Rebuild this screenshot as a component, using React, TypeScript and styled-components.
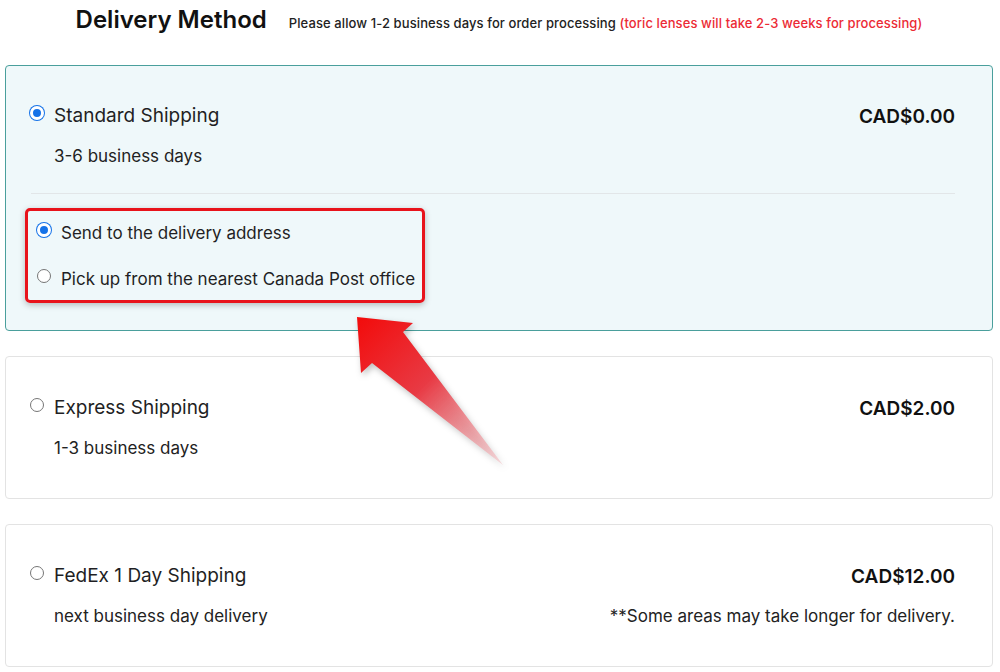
import React from 'react';
import styled, { createGlobalStyle } from 'styled-components';

const GlobalStyle = createGlobalStyle`
  body {
    margin: 0;
    background: #ffffff;
    font-family: Inter, "Noto Sans", sans-serif;
    color: #1f1f24;
  }
`;

const Page = styled.div`
  position: relative;
  width: 988px;
  padding: 0 7px 6px 5px;
`;

const Header = styled.div`
  display: flex;
  justify-content: center;
  align-items: baseline;
  gap: 22px;
  height: 65px;
  box-sizing: border-box;
`;

const Title = styled.h1`
  margin: 0;
  font-size: 24px;
  line-height: 40px;
  font-weight: 600;
  color: #111;
`;

const Note = styled.p`
  margin: 0;
  font-size: 13px;
  font-weight: 500;
  letter-spacing: 0.1px;
  color: #222;

  span {
    color: #ec2a35;
  }
`;

const Stack = styled.div`
  display: flex;
  flex-direction: column;
  gap: 25px;
`;

const Card = styled.div<{ $active?: boolean }>`
  border: 1px solid ${p => (p.$active ? '#4a9f9c' : '#e3e3e3')};
  background: ${p => (p.$active ? '#eff8fa' : '#ffffff')};
  border-radius: 4px;
  padding: ${p => (p.$active ? '38px 37px 27px 24px' : '39px 37px 38px 24px')};
`;

const Row = styled.div`
  display: flex;
  justify-content: space-between;
  align-items: center;
`;

const OptionLabel = styled.label<{ $size?: number }>`
  display: flex;
  align-items: center;
  gap: 10px;
  font-size: ${p => p.$size ?? 19}px;
  line-height: 24px;
`;

const Radio = styled.span<{ $checked?: boolean }>`
  box-sizing: border-box;
  width: 14px;
  height: 14px;
  border-radius: 50%;
  flex-shrink: 0;
  margin-top: -6px;
  border: ${p => (p.$checked ? '3px solid #ffffff' : '1px solid #767676')};
  background: ${p => (p.$checked ? '#1572e8' : '#ffffff')};
  box-shadow: ${p => (p.$checked ? '0 0 0 1px #1572e8' : 'none')};
`;

const Price = styled.div`
  font-size: 19px;
  font-weight: 600;
  color: #111;
`;

const SubRow = styled(Row)`
  margin-top: 16px;
  font-size: 17px;
  line-height: 24px;
  color: #222;
  padding-left: 24px;
`;

const Divider = styled.hr`
  border: 0;
  border-top: 1px solid #e2e6e8;
  margin: 25px 0 14px 1px;
`;

const Highlight = styled.div`
  display: inline-flex;
  flex-direction: column;
  gap: 22px;
  margin-left: -5px;
  padding: 10px 7px 9px 9px;
  border: 3px solid #e8131b;
  border-radius: 5px;
  box-shadow: 0 2px 6px rgba(0, 0, 0, 0.25);
`;

const ArrowLayer = styled.svg`
  position: absolute;
  left: 0;
  top: 0;
  pointer-events: none;
  filter: drop-shadow(2px 3px 3px rgba(0, 0, 0, 0.25));
`;

const options = [
  { name: 'Express Shipping', price: 'CAD$2.00', days: '1-3 business days' },
  { name: 'FedEx 1 Day Shipping', price: 'CAD$12.00', days: 'next business day delivery', extra: '**Some areas may take longer for delivery.' },
];

export default function App() {
  return (
    <Page>
      <GlobalStyle />
      <Header>
        <Title>Delivery Method</Title>
        <Note>
          Please allow 1-2 business days for order processing{' '}
          <span>(toric lenses will take 2-3 weeks for processing)</span>
        </Note>
      </Header>
      <Stack>
        <Card $active>
          <Row>
            <OptionLabel>
              <Radio $checked />
              Standard Shipping
            </OptionLabel>
            <Price>CAD$0.00</Price>
          </Row>
          <SubRow>
            <span>3-6 business days</span>
          </SubRow>
          <Divider />
          <Highlight>
            <OptionLabel $size={17}>
              <Radio $checked />
              Send to the delivery address
            </OptionLabel>
            <OptionLabel $size={17}>
              <Radio />
              Pick up from the nearest Canada Post office
            </OptionLabel>
          </Highlight>
        </Card>
        {options.map(o => (
          <Card key={o.name}>
            <Row>
              <OptionLabel>
                <Radio />
                {o.name}
              </OptionLabel>
              <Price>{o.price}</Price>
            </Row>
            <SubRow>
              <span>{o.days}</span>
              {o.extra && <span>{o.extra}</span>}
            </SubRow>
          </Card>
        ))}
      </Stack>
      <ArrowLayer width="1000" height="672">
        <defs>
          <linearGradient id="arrowFade" x1="360" y1="320" x2="503" y2="465" gradientUnits="userSpaceOnUse">
            <stop offset="0" stopColor="#f20d0d" />
            <stop offset="0.45" stopColor="#e83a44" />
            <stop offset="1" stopColor="#f3c4c8" stopOpacity="0.6" />
          </linearGradient>
        </defs>
        <polygon
          points="357,317 413,323 403,332 503,465 372,363 361,373"
          fill="url(#arrowFade)"
        />
      </ArrowLayer>
    </Page>
  );
}
